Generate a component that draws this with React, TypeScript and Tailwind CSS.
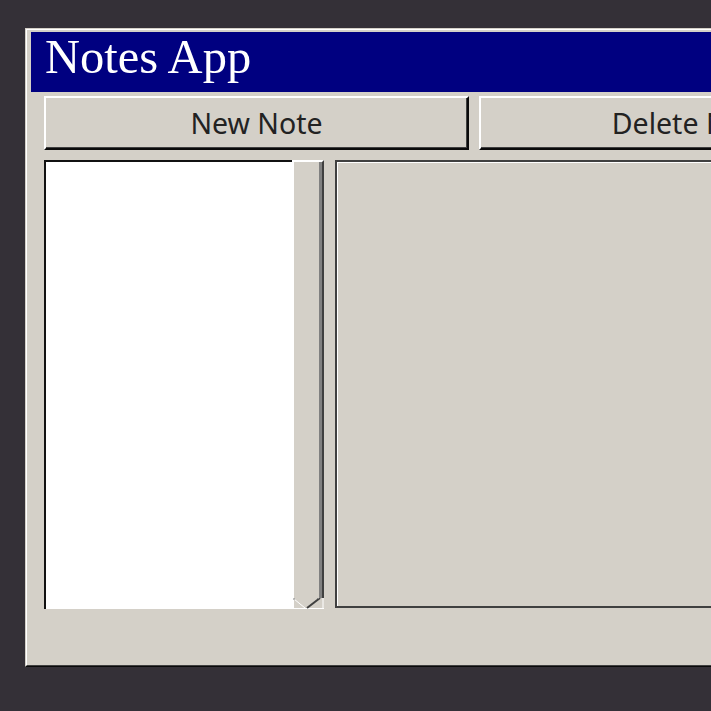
import React from "react";

export default function App() {
  return (
    <div className="w-[711px] h-[711px] overflow-hidden bg-[#343037] pl-[25px] pt-[28px]">
      <div className="w-[900px] h-[639px] border-t border-l border-t-[#d4d0c8] border-l-[#d4d0c8] border-b border-r border-b-[#0a0a0a] border-r-[#0a0a0a]">
        <div className="h-full flex flex-col bg-[#d4d0c8] border-t border-l border-t-white border-l-white border-b border-r border-b-[#404040] border-r-[#404040] pt-[2px] px-[4px]">
          <div className="h-[60px] bg-[#000080] pl-[14px] pt-[1px] shrink-0">
            <span
              className="text-white text-[48.5px] leading-none"
              style={{ fontFamily: '"Liberation Serif", "Times New Roman", serif' }}
            >
              Notes App
            </span>
          </div>
          <div className="flex flex-col px-[13px] pt-[4px]">
            <div className="flex gap-[10px] h-[54px]">
              {["New Note", "Delete Note"].map((t) => (
                <button
                  key={t}
                  className="w-[425px] h-[54px] flex items-center justify-center bg-[#d4d0c8] border-t-2 border-l-2 border-t-white border-l-white border-b-2 border-r-2 border-b-[#0a0a0a] border-r-[#0a0a0a] shadow-[inset_-1px_-1px_0_#404040] text-[28.5px] text-[#222]"
                  style={{ fontFamily: '"Noto Sans", "Open Sans", sans-serif' }}
                >
                  {t}
                </button>
              ))}
            </div>
            <div className="flex mt-[10px] h-[449px]">
              <div className="w-[248px] h-full bg-white border-t-2 border-l-2 border-t-[#111111] border-l-[#111111]" />
              <div className="w-[32px] h-full flex flex-col">
                <div className="flex-1 border-t-2 border-l-2 border-t-white border-l-white border-r-2 border-r-[#404040] shadow-[inset_-3px_0_0_#808080]" />
                <svg width="32" height="11" viewBox="0 0 32 11" className="block">
                  <line x1="1" y1="0" x2="1" y2="10.5" stroke="#ffffff" strokeWidth="2" />
                  <line x1="0" y1="10.5" x2="32" y2="10.5" stroke="#ffffff" strokeWidth="1" />
                  <line x1="2" y1="1" x2="13" y2="10" stroke="#ffffff" strokeWidth="1" />
                  <line x1="2" y1="0" x2="2" y2="2" stroke="#808080" strokeWidth="1" />
                  <line x1="15" y1="10" x2="28" y2="0" stroke="#404040" strokeWidth="2" />
                  <line x1="25" y1="0" x2="27" y2="0" stroke="#808080" strokeWidth="2" />
                  <line x1="31" y1="0" x2="31" y2="11" stroke="#ffffff" strokeWidth="1" />
                </svg>
              </div>
              <div className="ml-[11px] w-[569px] h-[448px] border-2 border-[#404040] shadow-[inset_1px_1px_0_#ffffff] bg-[#d4d0c8]" />
            </div>
          </div>
        </div>
      </div>
    </div>
  );
}
